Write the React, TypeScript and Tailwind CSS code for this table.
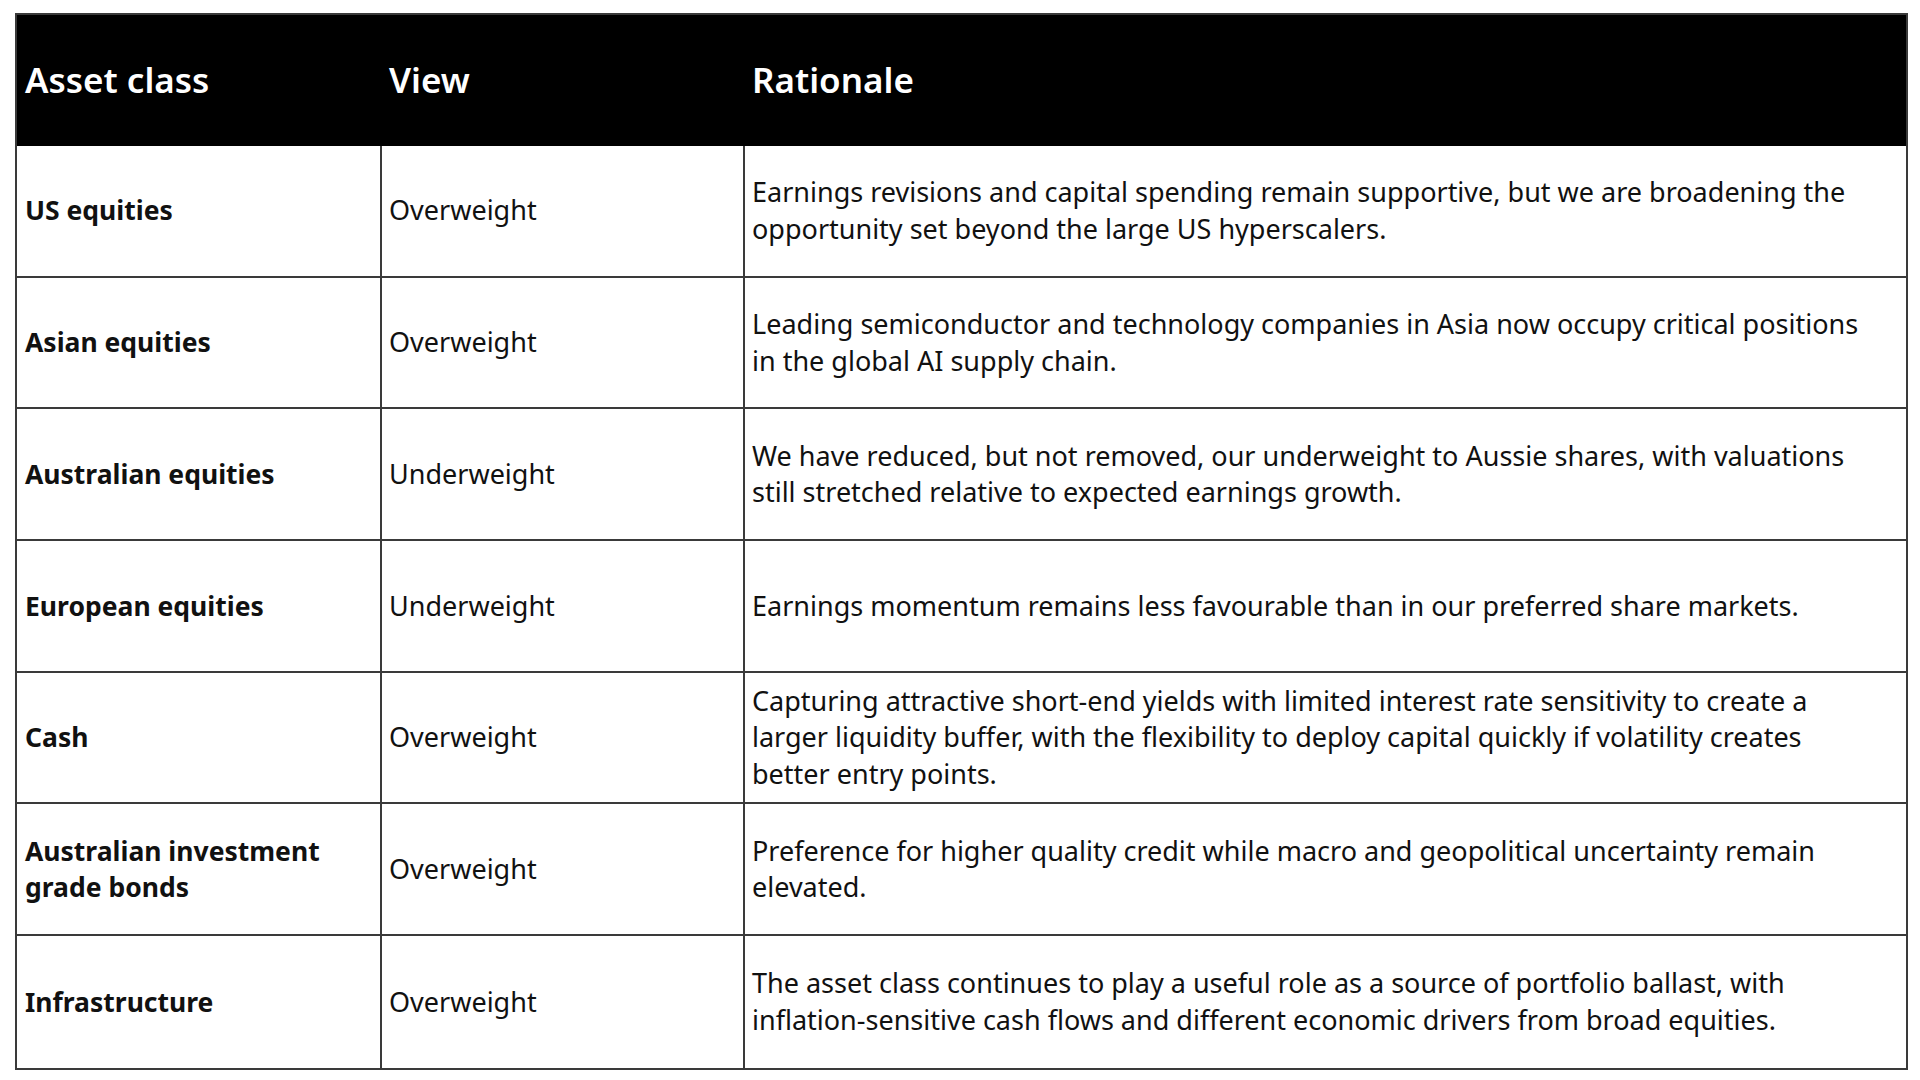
import React from 'react'

const rows = [
  {
    asset: 'US equities',
    view: 'Overweight',
    rationale:
      'Earnings revisions and capital spending remain supportive, but we are broadening the opportunity set beyond the large US hyperscalers.',
  },
  {
    asset: 'Asian equities',
    view: 'Overweight',
    rationale:
      'Leading semiconductor and technology companies in Asia now occupy critical positions in the global AI supply chain.',
  },
  {
    asset: 'Australian equities',
    view: 'Underweight',
    rationale:
      'We have reduced, but not removed, our underweight to Aussie shares, with valuations still stretched relative to expected earnings growth.',
  },
  {
    asset: 'European equities',
    view: 'Underweight',
    rationale: 'Earnings momentum remains less favourable than in our preferred share markets.',
  },
  {
    asset: 'Cash',
    view: 'Overweight',
    rationale:
      'Capturing attractive short-end yields with limited interest rate sensitivity to create a larger liquidity buffer, with the flexibility to deploy capital quickly if volatility creates better entry points.',
  },
  {
    asset: 'Australian investment grade bonds',
    view: 'Overweight',
    rationale:
      'Preference for higher quality credit while macro and geopolitical uncertainty remain elevated.',
  },
  {
    asset: 'Infrastructure',
    view: 'Overweight',
    rationale:
      'The asset class continues to play a useful role as a source of portfolio ballast, with inflation-sensitive cash flows and different economic drivers from broad equities.',
  },
]

const App = () => {
  return (
    <div className="w-[1920px] h-[1080px] bg-white pt-[13px] pl-[15px] font-['Noto_Sans',sans-serif] text-[#111]">
      <div className="w-[1893px] border-2 border-[#3a3a3a]">
        <div className="flex h-[131px] bg-black text-white text-[35px] font-semibold items-center">
          <div className="w-[363px] pl-[8px]">Asset class</div>
          <div className="w-[363px] pl-[9px]">View</div>
          <div className="flex-1 pl-[9px]">Rationale</div>
        </div>
        {rows.map((r, i) => (
          <div
            key={r.asset}
            className={
              'flex h-[131.7px] text-[27px] leading-[36.7px] ' +
              (i < rows.length - 1 ? 'border-b-2 border-[#3a3a3a]' : '')
            }
          >
            <div className="w-[365px] shrink-0 flex items-center pl-[8px] pr-[50px] text-[26.5px] font-bold border-r-2 border-[#3a3a3a]">
              {r.asset}
            </div>
            <div className="w-[363px] shrink-0 flex items-center pl-[7px] border-r-2 border-[#3a3a3a]">
              {r.view}
            </div>
            <div className="flex-1 flex items-center pl-[7px] pr-[32px]">{r.rationale}</div>
          </div>
        ))}
      </div>
    </div>
  )
}

export default App
